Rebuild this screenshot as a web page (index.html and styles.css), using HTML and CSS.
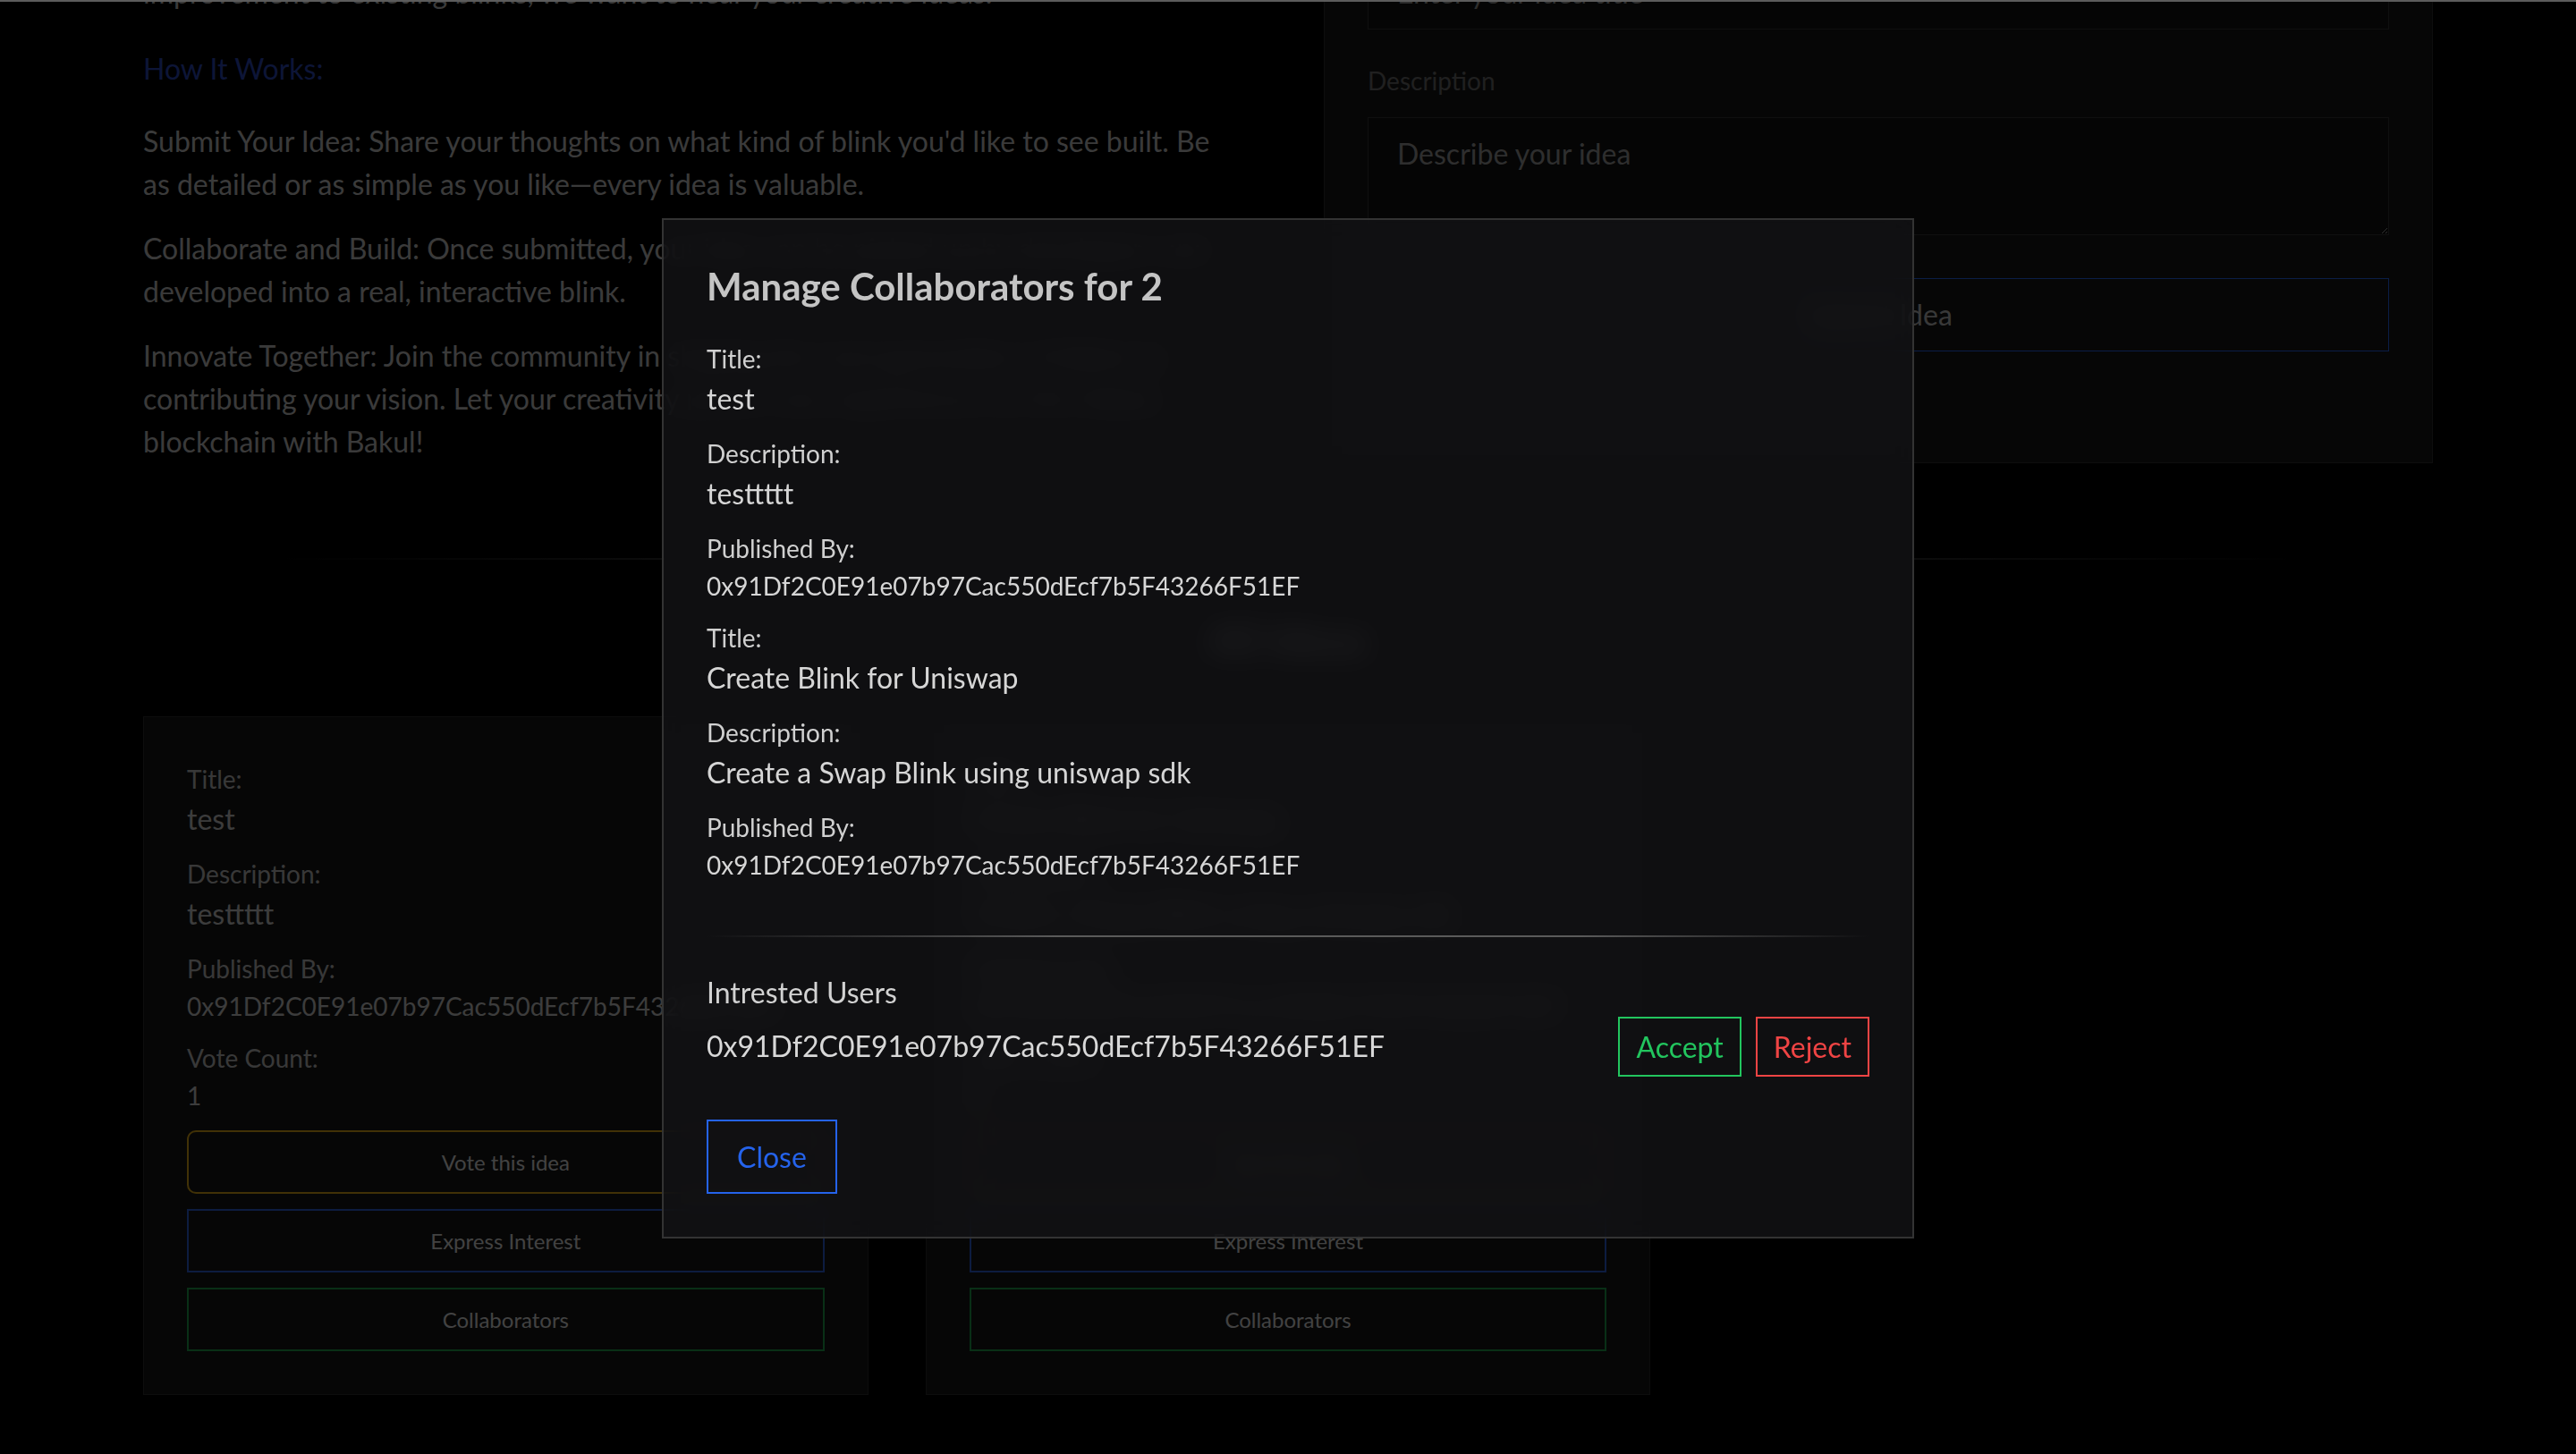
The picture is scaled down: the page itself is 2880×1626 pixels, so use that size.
FILE: index.html
```html
<!DOCTYPE html>
<html lang="en">
<head>
<meta charset="utf-8">
<title>Bakul – Blink Ideas</title>
<link rel="stylesheet" href="styles.css">
</head>
<body>
<main class="page">
  <section class="intro">
    <div class="intro-text">
      <h2 class="intro-title">Share Your Blink Ideas</h2>
      <p>Got an idea for a blink that could make a difference? Whether it's a new concept or an improvement to existing blinks, we want to hear your creative ideas.</p>
      <h3 class="how">How It Works:</h3>
      <p>Submit Your Idea: Share your thoughts on what kind of blink you'd like to see built. Be as detailed or as simple as you like—every idea is valuable.</p>
      <p>Collaborate and Build: Once submitted, your idea can be picked up by developers and developed into a real, interactive blink.</p>
      <p>Innovate Together: Join the community in shaping the next generation of blinks by contributing your vision. Let your creativity power new experiences on the Solana blockchain with Bakul!</p>
    </div>
    <form class="idea-form">
      <label class="form-label" for="title">Title</label>
      <input class="form-input" id="title" type="text" placeholder="Enter your idea title">
      <label class="form-label" for="desc">Description</label>
      <textarea class="form-input form-textarea" id="desc" placeholder="Describe your idea"></textarea>
      <button class="submit-btn" type="button">Submit Idea</button>
    </form>
  </section>

  <div class="page-divider"></div>
  <h2 class="ideas-heading">All Ideas</h2>

  <section class="ideas-grid">
    <article class="idea-card">
      <div class="field"><div class="field-label">Title:</div><div class="field-value">test</div></div>
      <div class="field"><div class="field-label">Description:</div><div class="field-value">testtttt</div></div>
      <div class="field"><div class="field-label">Published By:</div><div class="field-value small">0x91Df2C0E91e07b97Cac550dEcf7b5F43266F51EF</div></div>
      <div class="field"><div class="field-label">Vote Count:</div><div class="field-value small">1</div></div>
      <div class="card-actions">
        <button class="card-btn vote" type="button">Vote this idea</button>
        <button class="card-btn interest" type="button">Express Interest</button>
        <button class="card-btn collab" type="button">Collaborators</button>
      </div>
    </article>
    <article class="idea-card">
      <div class="field"><div class="field-label">Title:</div><div class="field-value">Create Blink for Uniswap</div></div>
      <div class="field"><div class="field-label">Description:</div><div class="field-value">Create a Swap Blink using uniswap sdk</div></div>
      <div class="field"><div class="field-label">Published By:</div><div class="field-value small">0x91Df2C0E91e07b97Cac550dEcf7b5F43266F51EF</div></div>
      <div class="field"><div class="field-label">Vote Count:</div><div class="field-value small">0</div></div>
      <div class="card-actions">
        <button class="card-btn vote" type="button">Vote this idea</button>
        <button class="card-btn interest" type="button">Express Interest</button>
        <button class="card-btn collab" type="button">Collaborators</button>
      </div>
    </article>
  </section>
</main>

<div class="overlay">
  <div class="modal" role="dialog">
    <h2 class="modal-title">Manage Collaborators for 2</h2>
    <div class="modal-idea">
      <div class="field"><div class="field-label">Title:</div><div class="field-value">test</div></div>
      <div class="field"><div class="field-label">Description:</div><div class="field-value">testtttt</div></div>
      <div class="field"><div class="field-label">Published By:</div><div class="field-value small">0x91Df2C0E91e07b97Cac550dEcf7b5F43266F51EF</div></div>
    </div>
    <div class="modal-idea">
      <div class="field"><div class="field-label">Title:</div><div class="field-value">Create Blink for Uniswap</div></div>
      <div class="field"><div class="field-label">Description:</div><div class="field-value">Create a Swap Blink using uniswap sdk</div></div>
      <div class="field"><div class="field-label">Published By:</div><div class="field-value small">0x91Df2C0E91e07b97Cac550dEcf7b5F43266F51EF</div></div>
    </div>
    <div class="modal-divider"></div>
    <h3 class="interested-title">Intrested Users</h3>
    <div class="interested-row">
      <span class="user-address">0x91Df2C0E91e07b97Cac550dEcf7b5F43266F51EF</span>
      <div class="row-actions">
        <button class="btn-accept" type="button">Accept</button>
        <button class="btn-reject" type="button">Reject</button>
      </div>
    </div>
    <div class="modal-footer">
      <button class="close-btn" type="button">Close</button>
    </div>
  </div>
</div>
</body>
</html>
```

FILE: styles.css
```css
* { box-sizing: border-box; }

html, body {
  margin: 0;
  padding: 0;
}

body {
  background: #000;
  color: #c4c4c4;
  font-family: "Lato", "Noto Sans", sans-serif;
  height: 1626px;
  overflow: hidden;
}

button, input, textarea { font-family: inherit; }

/* ---------- page behind the dialog ---------- */
.page {
  width: 2560px;
  margin: -160px auto 0;
}

.intro {
  display: grid;
  grid-template-columns: 1220px 1240px;
  column-gap: 100px;
}

.intro-title {
  font-size: 48px;
  line-height: 56px;
  font-weight: 700;
  margin: 0 0 24px;
  color: #e6e6e6;
}

.intro-text p {
  font-size: 32px;
  line-height: 48px;
  margin: 0 0 24px;
}

.intro-text p:last-child { margin-bottom: 0; }

.how {
  font-size: 32px;
  line-height: 48px;
  font-weight: 400;
  color: #2c48b8;
  margin: 37px 0 33px;
}

.idea-form {
  display: flex;
  flex-direction: column;
  background: #171717;
  border: 1px solid #2c2c2c;
  padding: 48px;
}

.form-label {
  font-size: 28px;
  line-height: 42px;
  color: #6b6b6b;
  margin-bottom: 20px;
}

.form-input {
  font-size: 32px;
  line-height: 48px;
  padding: 16px 32px;
  background: #121212;
  border: 1px solid #333;
  color: #eee;
  margin: 0 0 36px;
  outline: none;
}

.form-input::placeholder { color: #9a9a9a; }

.form-textarea {
  height: 132px;
  margin-bottom: 48px;
  resize: vertical;
}

.submit-btn {
  font-size: 32px;
  line-height: 48px;
  padding: 16px;
  background: transparent;
  border: 1px solid #2563eb;
  color: #bdbdbd;
}

.page-divider {
  height: 2px;
  margin-top: 106px;
  background: linear-gradient(90deg, transparent 5%, #6a6a6a 50%, transparent 95%);
}

.ideas-heading {
  text-align: center;
  font-size: 48px;
  line-height: 60px;
  font-weight: 700;
  color: #f0f0f0;
  margin: 59px 0 56px;
}

.ideas-grid {
  display: grid;
  grid-template-columns: repeat(3, 1fr);
  gap: 64px;
}

.idea-card {
  background: #171717;
  border: 1px solid #2c2c2c;
  padding: 48px;
}

.field { margin-bottom: 16px; }

.field-label {
  font-size: 28px;
  line-height: 42px;
  color: #bdbdbd;
}

.field-value {
  font-size: 32px;
  line-height: 48px;
  color: #c8c8c8;
}

.field-value.small {
  font-size: 28px;
  line-height: 42px;
}

.card-actions {
  display: flex;
  flex-direction: column;
  gap: 17px;
  margin-top: 18px;
}

.card-btn {
  width: 100%;
  font-size: 24px;
  line-height: 35px;
  padding: 16px;
  background: transparent;
  color: #dcdcdc;
  border: 2px solid;
}

.card-btn.vote { border-color: #d9a514; border-radius: 10px; }
.card-btn.interest { border-color: #2d5fd8; }
.card-btn.collab { border-color: #1f9e4a; }

/* ---------- dialog ---------- */
.overlay {
  position: fixed;
  inset: 0;
  display: flex;
  align-items: center;
  justify-content: center;
  background: rgba(0, 0, 0, 0.7);
  border-top: 2px solid #5c5c5c;
}

.modal {
  width: 1400px;
  padding: 48px;
  background: rgba(20, 20, 22, 0.76);
  backdrop-filter: blur(16px);
  border: 2px solid #333;
}

.modal-title {
  font-size: 42px;
  line-height: 52px;
  font-weight: 700;
  color: #c4c4c4;
  margin: 0 0 34px;
}

.modal .field-label { color: #d0d0d0; }
.modal .field-value { color: #d6d6d6; }

.modal-divider {
  height: 2px;
  margin: 58px 0 38px;
  background: linear-gradient(90deg, transparent, #5a5a5a 30%, #5a5a5a 75%, transparent);
}

.interested-title {
  font-size: 32px;
  line-height: 48px;
  font-weight: 400;
  color: #d2d2d2;
  margin: 0 0 3px;
}

.interested-row {
  display: flex;
  align-items: center;
  justify-content: space-between;
}

.user-address {
  font-size: 32px;
  line-height: 48px;
  color: #d8d8d8;
}

.row-actions {
  display: flex;
  gap: 16px;
}

.btn-accept,
.btn-reject {
  font-size: 32px;
  line-height: 31px;
  padding: 16px 18px;
  background: transparent;
  border: 2px solid;
}

.btn-accept { color: #22c55e; border-color: #22c55e; }
.btn-reject { color: #ef4444; border-color: #ef4444; }

.modal-footer { margin-top: 48px; }

.close-btn {
  font-size: 32px;
  line-height: 47px;
  padding: 16px 32px;
  background: transparent;
  color: #2563eb;
  border: 2px solid #2563eb;
}
```
